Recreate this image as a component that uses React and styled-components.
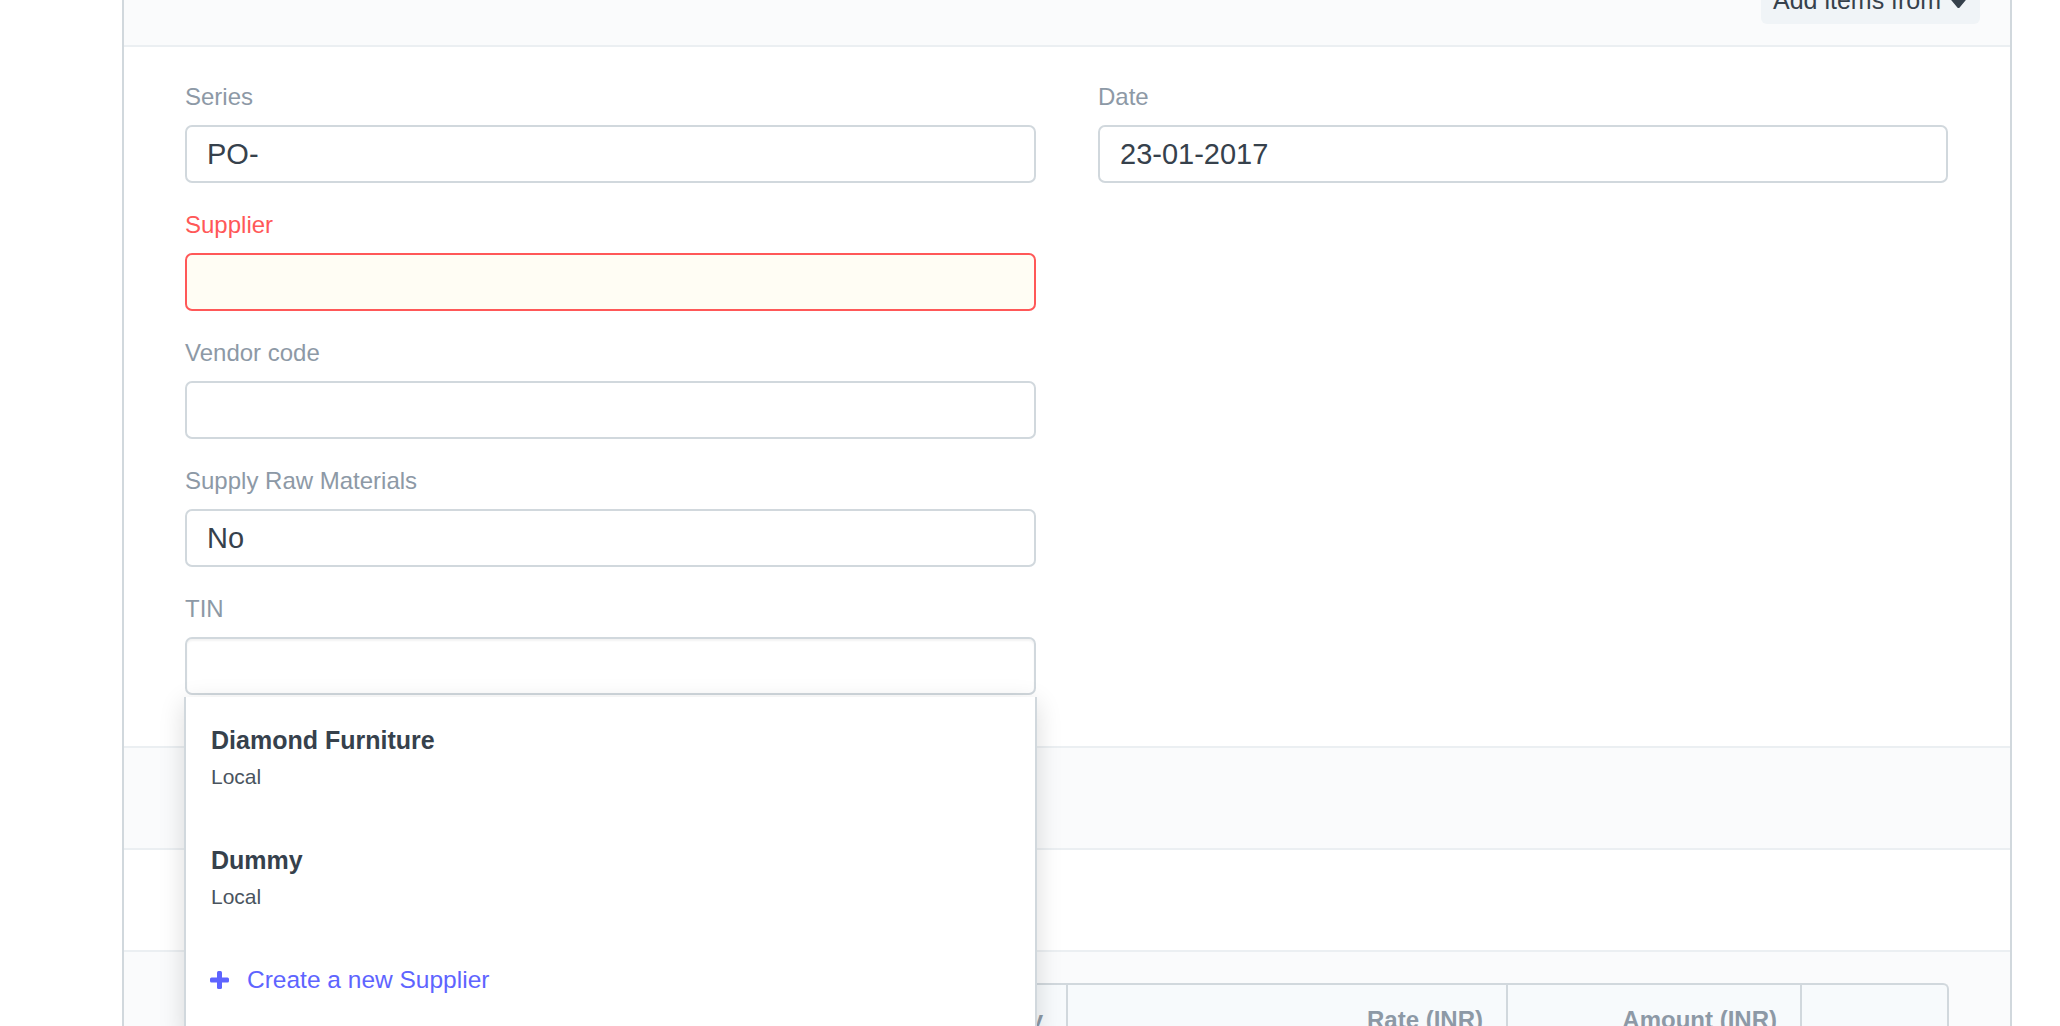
import React from 'react';
import styled, { createGlobalStyle } from 'styled-components';

const GlobalStyle = createGlobalStyle`
  html, body {
    margin: 0;
    padding: 0;
    background: #ffffff;
    overflow: hidden;
    font-family: "Liberation Sans", Arial, sans-serif;
    color: #36414c;
  }
`;

const FIELDS_LEFT = [
  { label: 'Series', value: 'PO-' },
  { label: 'Supplier', value: '', error: true },
  { label: 'Vendor code', value: '' },
  { label: 'Supply Raw Materials', value: 'No' },
  { label: 'TIN', value: '', focused: true, dropdown: true },
];

const SUPPLIERS = [
  { id: 1, name: 'Diamond Furniture', group: 'Local' },
  { id: 2, name: 'Dummy', group: 'Local' },
];

const COLUMNS = [
  { id: 'check', title: '', width: 70 },
  { id: 'no', title: 'No.', width: 80 },
  { id: 'item', title: 'Item Code', width: 380 },
  { id: 'date', title: 'Required By', width: 200 },
  { id: 'qty', title: 'Quantity', width: 151, right: true },
  { id: 'rate', title: 'Rate (INR)', width: 440, right: true },
  { id: 'amount', title: 'Amount (INR)', width: 294, right: true },
  { id: 'edit', title: '', width: 149 },
];

const Caret = () => (
  <svg width="19" height="14" viewBox="0 0 19 14">
    <path d="M2 2.5 H17 L9.5 11.5 Z" fill="#36414c" stroke="#36414c" strokeWidth="3" strokeLinejoin="round" />
  </svg>
);

const PlusIcon = () => (
  <svg width="19" height="18" viewBox="0 0 19 18">
    <rect x="7" y="0" width="5" height="18" rx="1.5" fill="#5e64ff" />
    <rect x="0" y="6.5" width="19" height="5" rx="1.5" fill="#5e64ff" />
  </svg>
);

const App = () => {
  return (
    <>
      <GlobalStyle />
      <Page>
        <Panel>
          <Header>
            <AddItemsBt>
              Add items from
              <Caret />
            </AddItemsBt>
          </Header>

          <FormSection>
            <Column>
              {FIELDS_LEFT.map(field => (
                <Field key={field.label}>
                  <Label error={field.error}>{field.label}</Label>
                  <InputWrap>
                    <Input error={field.error} focused={field.focused}>
                      {field.value}
                    </Input>
                    {field.dropdown && (
                      <Dropdown>
                        {SUPPLIERS.map(s => (
                          <DropItem key={s.id}>
                            <ItemName>{s.name}</ItemName>
                            <ItemSub>{s.group}</ItemSub>
                          </DropItem>
                        ))}
                        <CreateItem>
                          <PlusIcon />
                          Create a new Supplier
                        </CreateItem>
                      </Dropdown>
                    )}
                  </InputWrap>
                </Field>
              ))}
            </Column>
            <Column>
              <Field>
                <Label>Date</Label>
                <InputWrap>
                  <Input>23-01-2017</Input>
                </InputWrap>
              </Field>
            </Column>
          </FormSection>

          <Section gray />
          <Section />
          <Section gray last>
            <Grid>
              <GridHead>
                {COLUMNS.map(col => (
                  <HeadCell key={col.id} right={col.right} style={{ width: col.width }}>
                    {col.title}
                  </HeadCell>
                ))}
              </GridHead>
            </Grid>
          </Section>
        </Panel>
      </Page>
    </>
  );
};

const Page = styled.div`
  padding-left: 122px;
  min-height: 1026px;
`;

const Panel = styled.div`
  width: 1886px;
  border-left: 2px solid #d1d8dd;
  border-right: 2px solid #d1d8dd;
  min-height: 1026px;
  background: #fafbfc;
`;

const Header = styled.div`
  height: 45px;
  display: flex;
  justify-content: flex-end;
  align-items: flex-start;
  padding-right: 30px;
  background: #fafbfc;
  border-bottom: 2px solid #ebeff2;
`;

const AddItemsBt = styled.button`
  display: flex;
  align-items: center;
  gap: 8px;
  margin-top: -23px;
  height: 47px;
  width: 219px;
  padding: 0 10px 0 12px;
  border: none;
  border-radius: 6px;
  background: #f0f4f7;
  color: #36414c;
  font-family: "Liberation Sans", Arial, sans-serif;
  font-size: 25px;
  line-height: 47px;
  white-space: nowrap;
  cursor: pointer;
  svg {
    flex-shrink: 0;
    margin-top: 2px;
  }
`;

const FormSection = styled.div`
  display: grid;
  grid-template-columns: 851px 850px;
  column-gap: 62px;
  padding: 33px 62px 26px 61px;
  background: #ffffff;
  border-bottom: 2px solid #ebeff2;
  position: relative;
  z-index: 2;
`;

const Column = styled.div`
  display: flex;
  flex-direction: column;
`;

const Field = styled.div`
  margin-bottom: 25px;
`;

const Label = styled.div`
  font-size: 24px;
  line-height: 34px;
  height: 34px;
  margin-bottom: 11px;
  color: ${props => (props.error ? '#ff5858' : '#8d99a6')};
`;

const InputWrap = styled.div`
  position: relative;
`;

const Input = styled.div`
  box-sizing: border-box;
  height: 58px;
  padding: 0 20px;
  border: 2px solid ${props => (props.error ? '#ff5858' : '#d1d8dd')};
  border-radius: 7px;
  background: ${props => (props.error ? '#fffdf4' : '#ffffff')};
  box-shadow: ${props => (props.focused ? 'inset 0 2px 2px rgba(0, 0, 0, 0.05)' : 'none')};
  font-size: 29px;
  line-height: 54px;
  color: #36414c;
`;

const Dropdown = styled.div`
  position: absolute;
  top: calc(100% + 2px);
  left: -1px;
  right: -1px;
  background: #ffffff;
  border-left: 2px solid #d1d8dd;
  border-right: 2px solid #d1d8dd;
  box-shadow: 0 6px 24px rgba(0, 0, 0, 0.14);
  z-index: 10;
  padding-bottom: 40px;
`;

const DropItem = styled.div`
  padding: 26px 25px 25px;
`;

const ItemName = styled.div`
  font-size: 25px;
  line-height: 34px;
  font-weight: 700;
  color: #36414c;
  margin-bottom: 5px;
`;

const ItemSub = styled.div`
  font-size: 21px;
  line-height: 30px;
  color: #4a545e;
`;

const CreateItem = styled.div`
  display: flex;
  align-items: center;
  gap: 18px;
  padding: 26px 25px 0 24px;
  font-size: 24.5px;
  line-height: 34px;
  color: #5e64ff;
`;

const Section = styled.div`
  height: ${props => (props.last ? 'auto' : '100px')};
  background: ${props => (props.gray ? '#fafbfc' : '#ffffff')};
  border-bottom: ${props => (props.last ? 'none' : '2px solid #ebeff2')};
  padding: ${props => (props.last ? '31px 62px 0 61px' : '0')};
`;

const Grid = styled.div`
  width: 1764px;
  box-sizing: border-box;
  border: 2px solid #d1d8dd;
  border-bottom: none;
  border-radius: 6px 6px 0 0;
  background: #f7fafc;
  overflow: hidden;
`;

const GridHead = styled.div`
  display: flex;
  height: 72px;
`;

const HeadCell = styled.div`
  box-sizing: border-box;
  flex-shrink: 0;
  padding: 18px 23px 0;
  border-right: 2px solid #d1d8dd;
  font-size: 24px;
  line-height: 34px;
  font-weight: 700;
  color: #8d99a6;
  text-align: ${props => (props.right ? 'right' : 'left')};
  &:last-child {
    border-right: none;
  }
`;

export default App;
